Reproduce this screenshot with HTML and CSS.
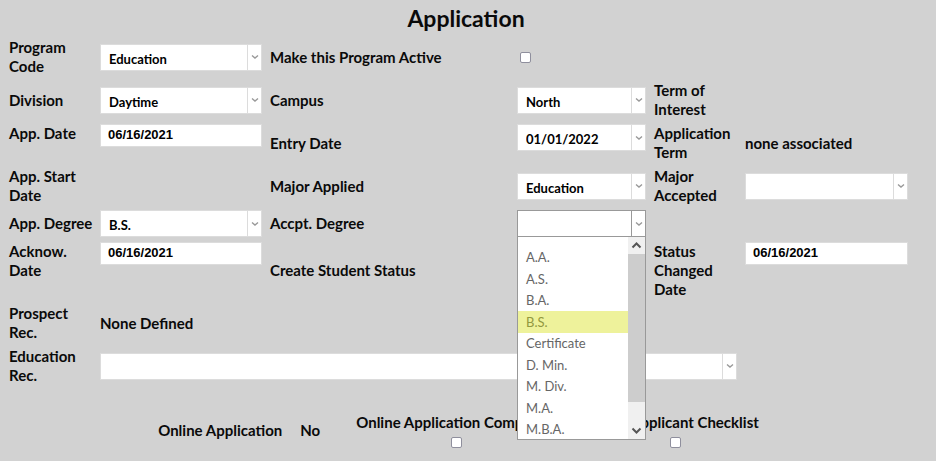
FILE: index.html
```html
<!DOCTYPE html>
<html lang="en">

<head>
  <meta charset="UTF-8">
  <meta name="viewport" content="width=device-width, initial-scale=1.0">
  <title>Application</title>
  <link rel="stylesheet" href="styles.css">
</head>

<body>
  <form class="application">
    <h1>Application</h1>

    <div class="fields">
      <label for="program">Program Code</label>
      <select id="program"><option>Education</option></select>
      <label for="active">Make this Program Active</label>
      <input type="checkbox" id="active">

      <label class="first" for="division">Division</label>
      <select id="division"><option>Daytime</option></select>
      <label for="campus">Campus</label>
      <select id="campus"><option>North</option></select>
      <span class="label">Term of Interest</span>

      <label class="first top" for="app_date">App. Date</label>
      <input class="top" type="text" id="app_date" value="06/16/2021">
      <label for="entry_date">Entry Date</label>
      <select class="top" id="entry_date"><option>01/01/2022</option></select>
      <span class="label">Application Term</span>
      <span class="value">none associated</span>

      <span class="label first">App. Start Date</span>
      <label class="third" for="major">Major Applied</label>
      <select id="major"><option>Education</option></select>
      <label for="major_accepted">Major Accepted</label>
      <select id="major_accepted"><option></option></select>

      <label class="first nowrap" for="degree">App. Degree</label>
      <select id="degree"><option>B.S.</option></select>
      <label for="accepted_degree">Accpt. Degree</label>
      <div class="dropdown">
        <select class="open" id="accepted_degree"><option></option></select>
        <div class="menu">
          <ul role="listbox" aria-label="Accpt. Degree">
            <li role="option">A.A.</li>
            <li role="option">A.S.</li>
            <li role="option">B.A.</li>
            <li role="option" class="active" aria-selected="true">B.S.</li>
            <li role="option">Certificate</li>
            <li role="option">D. Min.</li>
            <li role="option">M. Div.</li>
            <li role="option">M.A.</li>
            <li role="option">M.B.A.</li>
          </ul>
          <div class="scrollbar">
            <svg viewBox="0 0 17 17"><path d="M4.5 10.5 8.5 6.5l4 4"/></svg>
            <div class="thumb"></div>
            <div class="track"></div>
            <svg viewBox="0 0 17 17"><path d="M4.5 6.5l4 4 4-4"/></svg>
          </div>
        </div>
      </div>

      <label class="first top" for="acknow">Acknow. Date</label>
      <input class="top" type="text" id="acknow" value="06/16/2021">
      <span class="label">Create Student Status</span>
      <label class="fifth" for="status_date">Status Changed Date</label>
      <input class="top" type="text" id="status_date" value="06/16/2021">

      <span class="label first">Prospect Rec.</span>
      <span class="value">None Defined</span>

      <label class="first" for="education">Education Rec.</label>
      <select class="wide" id="education"><option></option></select>
    </div>

    <div class="online">
      <span>Online Application</span>
      <span>No</span>
      <label>Online Application Completed <input type="checkbox"></label>
      <label>View Applicant Checklist <input type="checkbox"></label>
    </div>
  </form>
</body>

</html>
```
FILE: styles.css
```css
* { box-sizing: border-box; }

body {
  margin: 0;
  background: #d2d2d2;
  color: #0a0a0a;
  font: bold 15px/19px Lato, sans-serif;
}

h1 { margin: 0 0 7px; font-size: 23px; line-height: 26px; text-align: center; }

.application { padding: 5px 28px 0 9px; }
.application h1 { margin-right: -24px; margin-left: -9px; }

.fields {
  display: grid;
  grid-template-columns: 83fr 162fr 239fr 129fr 83fr 163fr;
  gap: 5px 8px;
  align-items: center;
}
.fields > * { min-width: 0; }
.first { grid-column: 1; }
.third { grid-column: 3; }
.fifth { grid-column: 5; }
.top { align-self: start; }
.nowrap { white-space: nowrap; }

select,
input[type="text"] {
  display: block;
  width: 100%;
  border: 1px solid #dcdcdc;
  border-radius: 0;
  background-color: #fff;
  color: #000;
}

select {
  appearance: none;
  height: 27px;
  padding: 4px 20px 1px 8px;
  font: bold 13px/18px Lato, sans-serif;
  background-image:
    url("data:image/svg+xml,%3Csvg xmlns='http://www.w3.org/2000/svg' width='8' height='6'%3E%3Cpath d='M1 1.5 4 4 7 1.5' fill='none' stroke='%23999' stroke-width='1.4'/%3E%3C/svg%3E"),
    linear-gradient(#dcdcdc, #dcdcdc);
  background-repeat: no-repeat;
  background-position: right 2px center, right 13px top;
  background-size: 8px 6px, 1px 100%;
}
select.open {
  border-color: #999;
  background-image:
    url("data:image/svg+xml,%3Csvg xmlns='http://www.w3.org/2000/svg' width='8' height='6'%3E%3Cpath d='M1 1.5 4 4 7 1.5' fill='none' stroke='%23999' stroke-width='1.4'/%3E%3C/svg%3E"),
    linear-gradient(#999, #999);
}
select.wide { grid-column: 2 / 6; }

input[type="text"] {
  height: 23px;
  padding: 0 7px 2px;
  font: bold 13px/18px "Liberation Sans", Arial, sans-serif;
}

input[type="checkbox"] {
  appearance: none;
  width: 11px;
  height: 11px;
  margin: 0 0 0 3px;
  border: 1px solid #8f8f9d;
  border-radius: 2px;
  background: #fff;
}

/* open list */
.dropdown { position: relative; }
.menu {
  position: absolute;
  z-index: 1;
  top: 26px;
  right: 0;
  left: 0;
  display: flex;
  border: 1px solid #999;
  background: #fff;
}
.menu ul {
  flex: 1;
  margin: 0 0 -1px;
  padding: 10px 0 0;
  list-style: none;
  color: #666;
  font: 13px/21px Lato, sans-serif;
}
.menu li { padding: 0 8px; }
.menu li:nth-child(odd) { padding-bottom: 1px; }
.menu li:last-child { padding-bottom: 0; }
.menu li.active { margin-top: -1px; padding-top: 1px; background: #eef29b; color: #93983f; }

.scrollbar { display: flex; flex-direction: column; width: 17px; background: #f0f0f0; }
.scrollbar svg { width: 17px; height: 17px; fill: none; stroke: #555; stroke-width: 2; }
.scrollbar .thumb { flex: 148; background: #cdcdcd; }
.scrollbar .track { flex: 20; }

.online {
  display: flex;
  justify-content: center;
  align-items: center;
  gap: 18px;
  margin-top: 28px;
}
.online label {
  display: flex;
  flex-direction: column;
  align-items: center;
  gap: 5px;
  margin-left: 18px;
}
.online input[type="checkbox"] { margin: 0; }
```
